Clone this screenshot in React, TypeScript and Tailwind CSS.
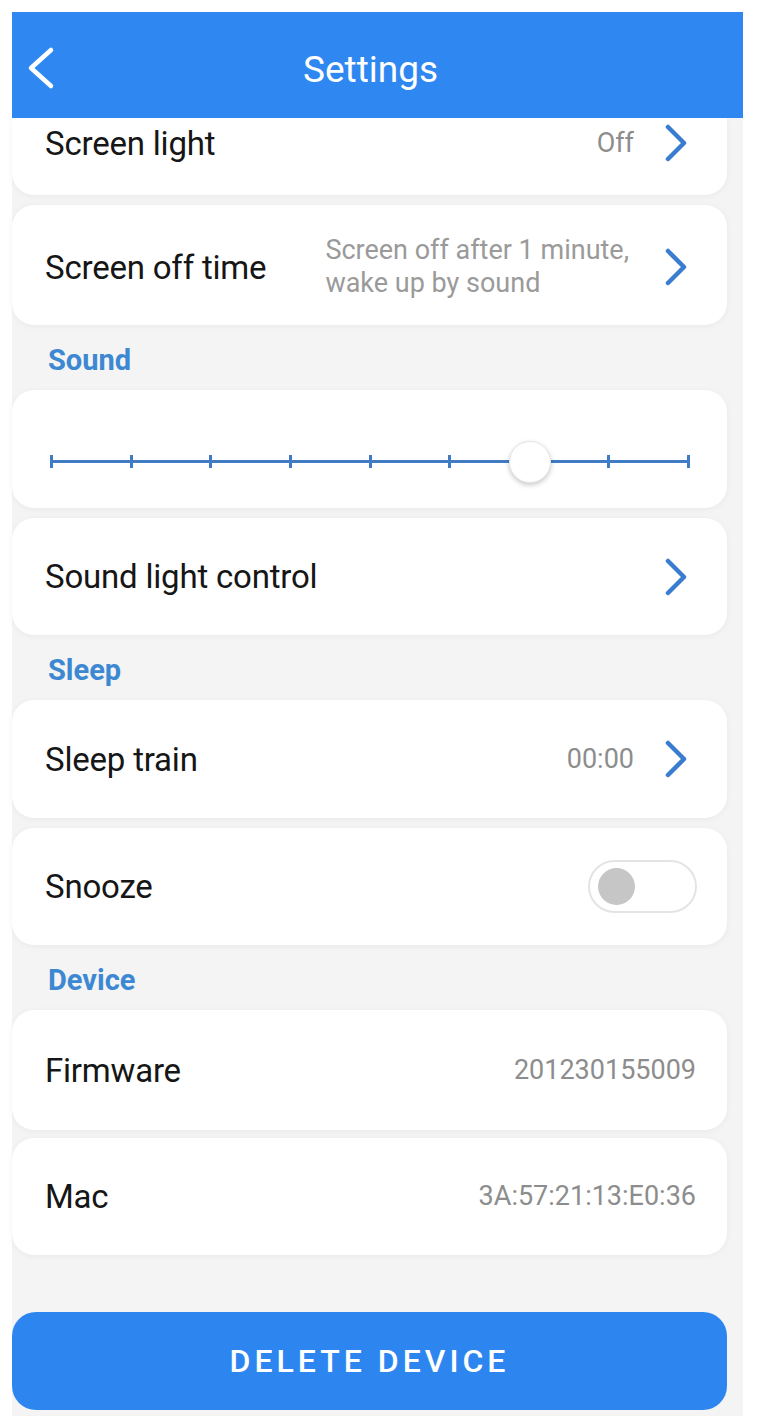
import type { ReactNode } from "react";

const FONT = { fontFamily: "Roboto, 'Liberation Sans', sans-serif" };

function Chevron() {
  return (
    <svg width="24" height="38" viewBox="0 0 24 38" className="shrink-0">
      <path
        d="M4 3 L20 19 L4 35"
        fill="none"
        stroke="#3a7cd0"
        strokeWidth="4.5"
        strokeLinecap="round"
        strokeLinejoin="round"
      />
    </svg>
  );
}

function BackArrow() {
  return (
    <svg width="30" height="44" viewBox="0 0 30 44">
      <path
        d="M25 4 L5 22 L25 40"
        fill="none"
        stroke="#ffffff"
        strokeWidth="4.5"
        strokeLinecap="round"
        strokeLinejoin="round"
      />
    </svg>
  );
}

// padding-right is set per card so it never fights a default
function Card({
  children,
  className = "",
}: {
  children: ReactNode;
  className?: string;
}) {
  return (
    <div
      className={`flex items-center rounded-[22px] bg-white shadow-[0_1px_6px_rgba(0,0,0,0.05)] ${className}`}
    >
      {children}
    </div>
  );
}

function Label({ children }: { children: ReactNode }) {
  return (
    <span className="text-[33px] leading-none tracking-[-0.2px] text-[#161616]">
      {children}
    </span>
  );
}

function Value({ children }: { children: ReactNode }) {
  return (
    <span className="text-[27px] leading-none text-[#8d8d8d]">{children}</span>
  );
}

function Section({ title }: { title: string }) {
  return (
    <div className="flex h-[65px] items-start pl-[36px] pt-[21px]">
      <span className="text-[29px] font-bold leading-none text-[#3d88d2]">
        {title}
      </span>
    </div>
  );
}

function Slider() {
  const ticks = [0, 1, 2, 3, 4, 5, 6, 7, 8];
  return (
    <div className="relative h-[20px] w-[640px]">
      <div className="absolute left-0 right-0 top-[8px] h-[3px] bg-[#3f7cc4]" />
      <div className="absolute inset-0 flex justify-between">
        {ticks.map((t) => (
          <div key={t} className="mt-[3px] h-[13px] w-[3px] bg-[#3f7cc4]" />
        ))}
      </div>
      <div className="absolute left-[459px] top-[-11px] h-[42px] w-[42px] rounded-full border border-[#e6e6e6] bg-white shadow-[0_2px_5px_rgba(0,0,0,0.22)]" />
    </div>
  );
}

function Toggle() {
  return (
    <div className="flex h-[53px] w-[109px] items-center rounded-full border-2 border-[#e4e4e4] bg-white pl-[8px]">
      <div className="h-[37px] w-[37px] rounded-full bg-[#c6c6c6]" />
    </div>
  );
}

export default function App() {
  return (
    <div className="min-h-screen bg-white pl-3 pr-[14px] pt-3" style={FONT}>
      <div className="flex h-[1404px] flex-col bg-[#f4f4f4]">
        <header className="relative z-10 flex h-[106px] shrink-0 items-center justify-center bg-[#2f87f1] pr-[14px] pt-[8px]">
          <div className="absolute left-[14px] top-[34px]">
            <BackArrow />
          </div>
          <h1 className="text-[37px] font-normal leading-none text-white">
            Settings
          </h1>
        </header>

        <div className="flex flex-col pr-[16px]">
          <div className="flex h-[77px] items-start rounded-b-[22px] bg-white pl-[33px] pr-[39px] shadow-[0_1px_6px_rgba(0,0,0,0.05)]">
            <div className="flex h-[50px] w-full items-center justify-between">
              <Label>Screen light</Label>
              <div className="flex items-center gap-[30px]">
                <Value>Off</Value>
                <Chevron />
              </div>
            </div>
          </div>

          <Card className="mt-[10px] h-[120px] justify-between pl-[33px] pr-[39px] pt-[4px]">
            <Label>Screen off time</Label>
            <div className="flex items-center gap-[35px]">
              <div className="flex flex-col gap-[6px] text-[27px] leading-none text-[#9a9a9a]">
                <span>Screen off after 1 minute,</span>
                <span>wake up by sound</span>
              </div>
              <Chevron />
            </div>
          </Card>

          <Section title="Sound" />

          <Card className="h-[118px] pl-[38px] pr-[37px]">
            <div className="pt-[26px]">
              <Slider />
            </div>
          </Card>

          <Card className="mt-[10px] h-[117px] justify-between pl-[33px] pr-[39px]">
            <Label>Sound light control</Label>
            <Chevron />
          </Card>

          <Section title="Sleep" />

          <Card className="h-[118px] justify-between pl-[33px] pr-[39px]">
            <Label>Sleep train</Label>
            <div className="flex items-center gap-[30px]">
              <Value>00:00</Value>
              <Chevron />
            </div>
          </Card>

          <Card className="mt-[10px] h-[117px] justify-between pl-[33px] pr-[30px]">
            <Label>Snooze</Label>
            <Toggle />
          </Card>

          <Section title="Device" />

          <Card className="h-[120px] justify-between pl-[33px] pr-[31px]">
            <Label>Firmware</Label>
            <Value>201230155009</Value>
          </Card>

          <Card className="mt-[8px] h-[117px] justify-between pl-[33px] pr-[31px]">
            <Label>Mac</Label>
            <Value>3A:57:21:13:E0:36</Value>
          </Card>

          <button className="mt-[57px] flex h-[98px] items-center justify-center rounded-[24px] bg-[#2d86f0]">
            <span className="text-[32px] font-medium leading-none tracking-[4px] text-white">
              DELETE DEVICE
            </span>
          </button>
        </div>
      </div>
    </div>
  );
}
